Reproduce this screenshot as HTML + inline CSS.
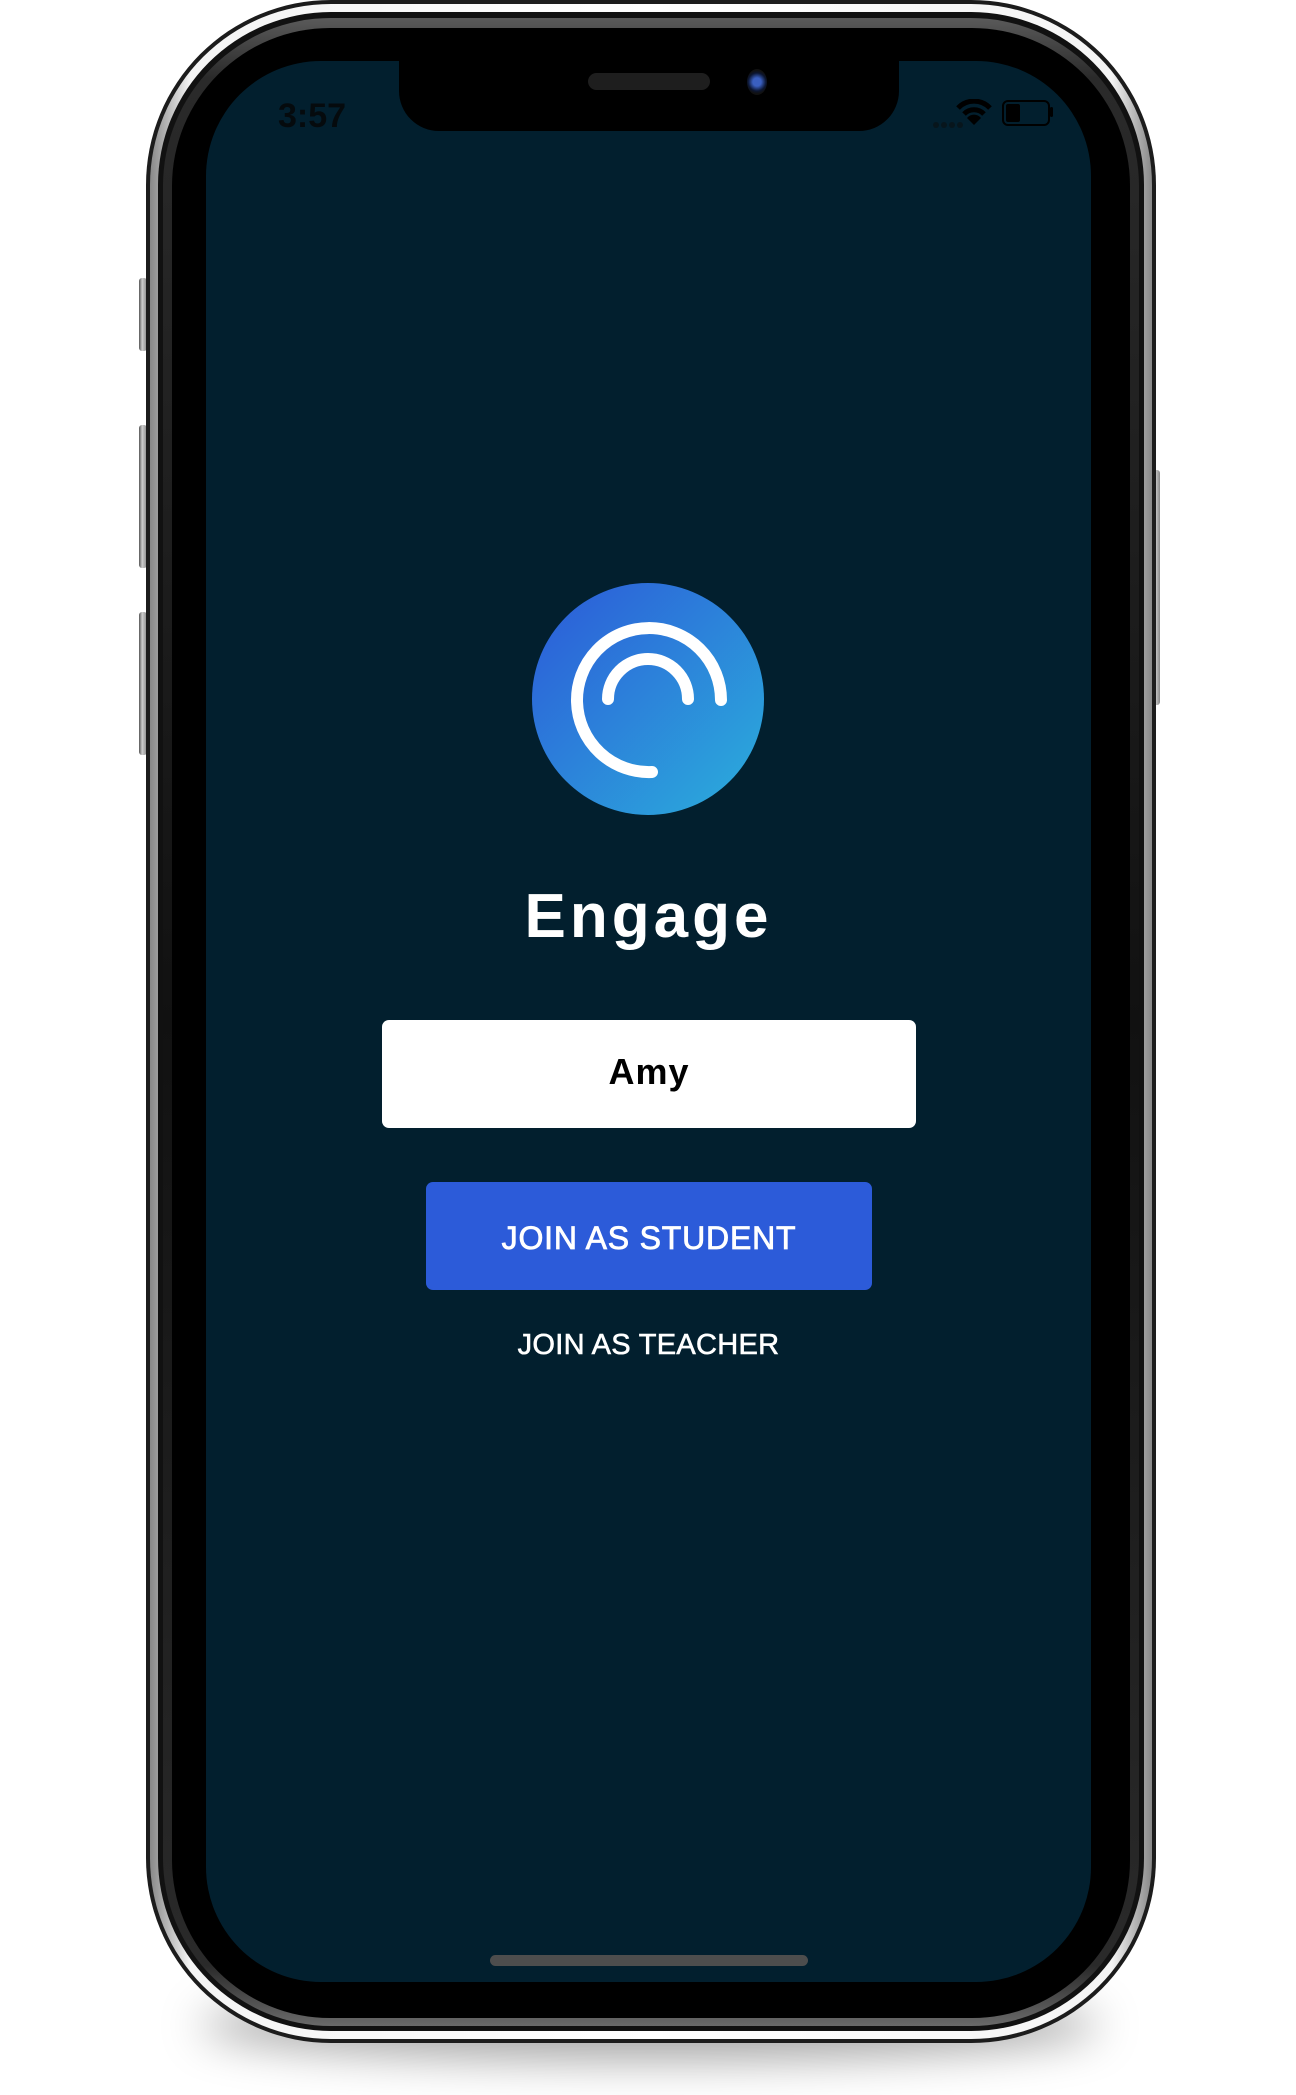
<!DOCTYPE html>
<html><head><meta charset="utf-8"><style>
html,body{margin:0;padding:0;background:#fff;}
body{width:1296px;height:2095px;position:relative;overflow:hidden;font-family:"Liberation Sans",sans-serif;}
.abs{position:absolute;}
.shadow{left:200px;top:1990px;width:900px;height:70px;border-radius:50%;background:rgba(0,0,0,0.35);filter:blur(22px);}
.btn{background:linear-gradient(90deg,#555,#ccc 40%,#888);border-radius:3px;}
</style></head><body>
<div class="abs shadow"></div>
<div class="abs btn" style="left:139px;top:278px;width:8px;height:73px"></div>
<div class="abs btn" style="left:139px;top:425px;width:8px;height:143px"></div>
<div class="abs btn" style="left:139px;top:612px;width:8px;height:143px"></div>
<div class="abs btn" style="left:1152px;top:470px;width:8px;height:235px"></div>
<div class="abs" style="left:146px;top:0;width:1010px;height:2043px;border-radius:185px;background:#1c1c1c;"></div>
<div class="abs" style="left:150px;top:4px;width:1002px;height:2035px;border-radius:181px;background:linear-gradient(90deg,#888,#f4f4f4 4%,#fff 50%,#f4f4f4 96%,#888);"></div>
<div class="abs" style="left:158px;top:12px;width:986px;height:2019px;border-radius:173px;background:#111;"></div>
<div class="abs" style="left:163px;top:18px;width:976px;height:2008px;border-radius:168px;background:linear-gradient(180deg,#5a5a5a,#2a2a2a 3%,#111 50%,#2a2a2a 97%,#6a6a6a);"></div>
<div class="abs" style="left:172px;top:28px;width:958px;height:1990px;border-radius:158px;background:#000;"></div>
<div class="abs" style="left:206px;top:61px;width:885px;height:1921px;border-radius:115px;background:#021f2e;overflow:hidden;">
  <div class="abs" style="left:193px;top:-2px;width:500px;height:72px;background:#000;border-radius:0 0 40px 40px;"></div>
  <div class="abs" style="left:382px;top:12px;width:122px;height:17px;border-radius:9px;background:#1e1e1e;"></div>
  <div class="abs" style="left:541px;top:8px;width:20px;height:26px;border-radius:50%;background:radial-gradient(circle,#3a5fc0 25%,#0b1530 55%,#111 70%);"></div>
  <div class="abs" style="left:72px;top:36px;font-size:34px;color:#050a0d;font-weight:bold;">3:57</div>
  <div class="abs" style="left:727px;top:55px;width:32px;height:6px;">
    <svg width="32" height="8"><circle cx="3" cy="4" r="3" fill="#07151c"/><circle cx="11" cy="4" r="3" fill="#07151c"/><circle cx="19" cy="4" r="3" fill="#07151c"/><circle cx="27" cy="4" r="3" fill="#07151c"/></svg></div>
  <svg class="abs" style="left:749px;top:38px" width="38" height="26" viewBox="0 0 38 26">
    <path d="M3 9 A22 22 0 0 1 35 9" stroke="#000" stroke-width="5" fill="none"/>
    <path d="M9 15 A14 14 0 0 1 29 15" stroke="#000" stroke-width="5" fill="none"/>
    <path d="M19 26 L12 19 A9 9 0 0 1 26 19 Z" fill="#000"/>
  </svg>
  <div class="abs" style="left:796px;top:39px;width:44px;height:22px;border:2px solid #000;border-radius:6px;"></div>
  <div class="abs" style="left:800px;top:43px;width:14px;height:18px;background:#000;border-radius:2px;"></div>
  <div class="abs" style="left:844px;top:46px;width:3px;height:10px;background:#000;border-radius:2px;"></div>
  <svg class="abs" style="left:326px;top:522px" width="232" height="232" viewBox="0 0 232 232">
    <defs><linearGradient id="g" x1="0" y1="0" x2="1" y2="1"><stop offset="0" stop-color="#2c59d8"/><stop offset="1" stop-color="#2bafdc"/></linearGradient></defs>
    <circle cx="116" cy="116" r="116" fill="url(#g)"/>
    <path d="M120 189 A72 72 0 1 1 189 117" stroke="#fff" stroke-width="12" fill="none" stroke-linecap="round"/>
    <path d="M76 116 A40 40 0 0 1 156 116" stroke="#fff" stroke-width="12" fill="none" stroke-linecap="round"/>
  </svg>
  <div class="abs" style="left:0;width:885px;top:820px;text-align:center;font-size:62px;font-weight:bold;color:#fff;letter-spacing:4px;">Engage</div>
  <div class="abs" style="left:176px;top:959px;width:534px;height:108px;background:#fff;border-radius:7px;"></div>
  <div class="abs" style="left:176px;top:990px;width:534px;text-align:center;font-size:36px;font-weight:bold;color:#000;letter-spacing:1px;">Amy</div>
  <div class="abs" style="left:220px;top:1121px;width:446px;height:108px;background:#2c5bd9;border-radius:7px;"></div>
  <div class="abs" style="left:220px;top:1159px;width:446px;text-align:center;font-size:32px;color:#fff;letter-spacing:0.8px;-webkit-text-stroke:0.8px #fff;">JOIN AS STUDENT</div>
  <div class="abs" style="left:0;width:885px;top:1268px;text-align:center;font-size:29px;color:#fff;letter-spacing:0.3px;-webkit-text-stroke:0.6px #fff;">JOIN AS TEACHER</div>
  <div class="abs" style="left:284px;top:1894px;width:318px;height:11px;border-radius:6px;background:#4d4d4d;"></div>
</div>
</body></html>
